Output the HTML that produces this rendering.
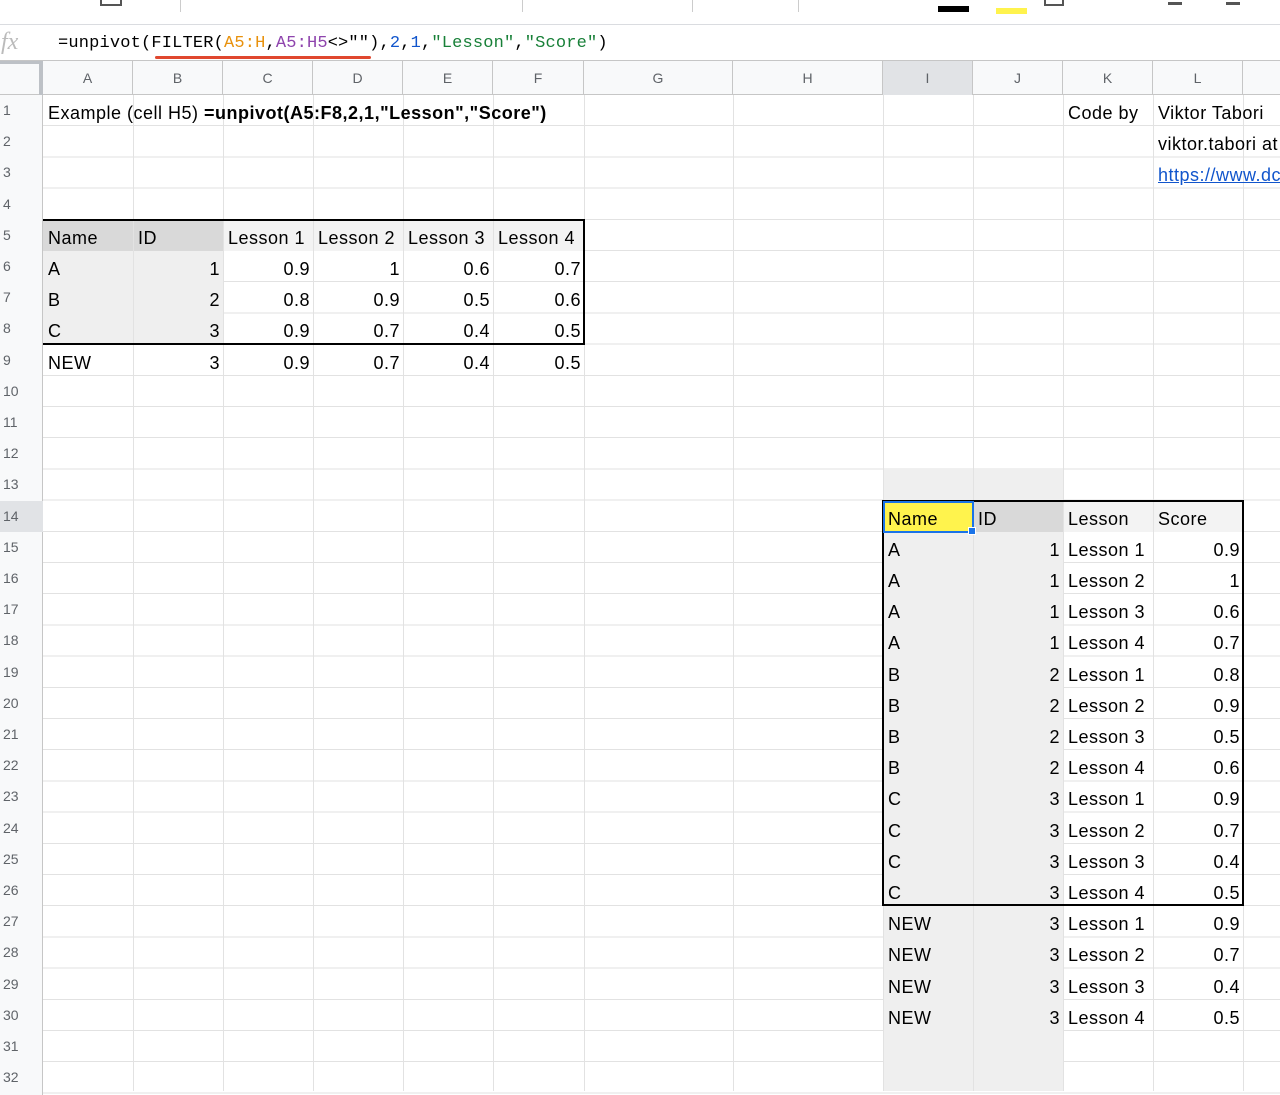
<!DOCTYPE html>
<html><head><meta charset="utf-8">
<style>
*{margin:0;padding:0;box-sizing:border-box}
body{width:1280px;height:1091px;overflow:hidden;background:#fff;position:relative;font-family:"Liberation Sans",Arial,sans-serif;color:#000}
.abs{position:absolute}
#grid{position:absolute;left:0;top:95px;width:1280px;height:1000px;
background-image:repeating-linear-gradient(to bottom,transparent 0,transparent 30.2px,#e2e2e2 30.2px,#e2e2e2 31.2px)}
.v{position:absolute;top:61px;width:1px;height:1030px;background:#e2e2e2}
.c{position:absolute;height:31.2px;line-height:31.2px;font-size:18px;letter-spacing:0.5px;padding:3px 4px 0 5px;white-space:nowrap;overflow:hidden}
.n{text-align:right;padding-right:3px}
.rh{position:absolute;left:0;width:40px;height:31.2px;line-height:31.2px;font-size:14px;color:#5f6368;padding-left:3px}
.ch{position:absolute;top:61px;height:34px;line-height:34px;text-align:center;font-size:14px;color:#5f6368;border-right:1px solid #c6c6c6}
.A{left:43px;width:90px}.B{left:133px;width:90px}.C{left:223px;width:90px}.D{left:313px;width:90px}.E{left:403px;width:90px}.F{left:493px;width:91px}
.I{left:883px;width:90px}.J{left:973px;width:90px}.K{left:1063px;width:90px}.L{left:1153px;width:127px}
.r1{top:95px}.r2{top:126.2px}.r3{top:157.4px}.r4{top:188.6px}.r5{top:219.8px}.r6{top:251px}.r7{top:282.2px}.r8{top:313.4px}.r9{top:344.6px}.r10{top:375.8px}.r11{top:407px}.r12{top:438.2px}.r13{top:469.4px}.r14{top:500.6px}.r15{top:531.8px}.r16{top:563px}.r17{top:594.2px}.r18{top:625.4px}.r19{top:656.6px}.r20{top:687.8px}.r21{top:719px}.r22{top:750.2px}.r23{top:781.4px}.r24{top:812.6px}.r25{top:843.8px}.r26{top:875px}.r27{top:906.2px}.r28{top:937.4px}.r29{top:968.6px}.r30{top:999.8px}.r31{top:1031px}.r32{top:1062.2px}
.mono{font-family:"Liberation Mono","DejaVu Sans Mono",monospace}
</style></head><body>
<div class="abs" style="left:0;top:0;width:1280px;height:25px;background:#fff;border-bottom:1px solid #dadce0"></div>
<div class="abs" style="left:100px;top:0;width:22px;height:6px;border:2px solid #555;border-top:none"></div>
<div class="abs" style="left:180px;top:0;width:1px;height:12px;background:#ccc"></div>
<div class="abs" style="left:522px;top:0;width:1px;height:12px;background:#ccc"></div>
<div class="abs" style="left:692px;top:0;width:1px;height:12px;background:#ccc"></div>
<div class="abs" style="left:798px;top:0;width:1px;height:12px;background:#ccc"></div>
<div class="abs" style="left:938px;top:6px;width:31px;height:6px;background:#000"></div>
<div class="abs" style="left:996px;top:8px;width:31px;height:6px;background:#fff34d"></div>
<div class="abs" style="left:1044px;top:0;width:20px;height:6px;border:2px solid #555;border-top:none"></div>
<div class="abs" style="left:1168px;top:2px;width:14px;height:3px;background:#555"></div>
<div class="abs" style="left:1226px;top:2px;width:14px;height:3px;background:#555"></div>
<div class="abs" style="left:0;top:26px;width:1280px;height:35px;background:#fff;border-bottom:1px solid #c6c6c6"></div>
<div class="abs" style="left:1px;top:27px;font:italic 24px 'Liberation Serif',serif;color:#bbb;line-height:30px">fx</div>
<div class="abs mono" style="left:58px;top:33px;font-size:17px;letter-spacing:0.17px;line-height:22px;white-space:pre">=unpivot(FILTER(<span style="color:#e8910c">A5:H</span>,<span style="color:#8e44ad">A5:H5</span>&lt;&gt;""),<span style="color:#1155cc">2</span>,<span style="color:#1155cc">1</span>,<span style="color:#188038">"Lesson"</span>,<span style="color:#188038">"Score"</span>)</div>
<div class="abs" style="left:155px;top:56px;width:216px;height:3px;background:#e0472f;border-radius:2px"></div>
<div id="grid"></div>
<div class="abs" style="left:43px;top:220px;width:180px;height:31px;background:#d9d9d9"></div>
<div class="abs" style="left:223px;top:220px;width:361px;height:31px;background:#f3f3f3"></div>
<div class="abs" style="left:43px;top:251px;width:180px;height:93px;background:#efefef"></div>
<div class="abs" style="left:883px;top:469.4px;width:180px;height:622px;background:#efefef"></div>
<div class="abs" style="left:973px;top:500.6px;width:90px;height:31px;background:#d9d9d9"></div>
<div class="abs" style="left:1063px;top:500.6px;width:180px;height:31px;background:#f3f3f3"></div>
<div class="abs" style="left:883px;top:500.6px;width:90px;height:31px;background:#fff34d"></div>
<div class="v" style="left:133px"></div><div class="v" style="left:223px"></div><div class="v" style="left:313px"></div><div class="v" style="left:403px"></div><div class="v" style="left:493px"></div><div class="v" style="left:584px"></div><div class="v" style="left:733px"></div><div class="v" style="left:883px"></div><div class="v" style="left:973px"></div><div class="v" style="left:1063px"></div><div class="v" style="left:1153px"></div><div class="v" style="left:1243px"></div>
<div class="abs" style="left:43px;top:219px;width:542px;height:126px;border:2px solid #000;border-left:none"></div>
<div class="abs" style="left:882px;top:500px;width:362px;height:406px;border:2px solid #000"></div>
<div class="abs" style="left:883px;top:500.6px;width:91px;height:32px;border:2px solid #1a73e8"></div>
<div class="abs" style="left:968px;top:527px;width:8px;height:8px;background:#1a73e8;border:1px solid #fff"></div>
<div class="abs" style="left:0;top:61px;width:1280px;height:34px;background:#f8f9fa;border-bottom:1px solid #c6c6c6"></div>
<div class="abs" style="left:39px;top:61px;width:4px;height:34px;background:#bdc1c6"></div>
<div class="abs" style="left:0;top:61px;width:43px;height:3px;background:#bdc1c6"></div>
<div class="ch A">A</div><div class="ch B">B</div><div class="ch C">C</div><div class="ch D">D</div><div class="ch E">E</div><div class="ch F">F</div>
<div class="ch" style="left:584px;width:149px">G</div><div class="ch" style="left:733px;width:150px">H</div>
<div class="ch I" style="background:#e1e3e6">I</div><div class="ch J">J</div><div class="ch K">K</div><div class="ch L" style="width:90px">L</div>
<div class="abs" style="left:0;top:95px;width:43px;height:1000px;background:#f8f9fa;border-right:1px solid #c6c6c6"></div>
<div class="abs" style="left:0;top:500.6px;width:43px;height:31px;background:#e1e3e6"></div>
<div class="rh r1">1</div><div class="rh r2">2</div><div class="rh r3">3</div><div class="rh r4">4</div><div class="rh r5">5</div><div class="rh r6">6</div><div class="rh r7">7</div><div class="rh r8">8</div><div class="rh r9">9</div><div class="rh r10">10</div><div class="rh r11">11</div><div class="rh r12">12</div><div class="rh r13">13</div><div class="rh r14">14</div><div class="rh r15">15</div><div class="rh r16">16</div><div class="rh r17">17</div><div class="rh r18">18</div><div class="rh r19">19</div><div class="rh r20">20</div><div class="rh r21">21</div><div class="rh r22">22</div><div class="rh r23">23</div><div class="rh r24">24</div><div class="rh r25">25</div><div class="rh r26">26</div><div class="rh r27">27</div><div class="rh r28">28</div><div class="rh r29">29</div><div class="rh r30">30</div><div class="rh r31">31</div><div class="rh r32">32</div>
<div class="c r1" style="left:43px;width:600px">Example (cell H5) <b>=unpivot(A5:F8,2,1,"Lesson","Score")</b></div>
<div class="c r1 K">Code by</div><div class="c r1 L">Viktor Tabori</div>
<div class="c r2 L">viktor.tabori at</div>
<div class="c r3 L" style="color:#1155cc;text-decoration:underline">https://www.dc</div>
<div class="c r5 A">Name</div><div class="c r5 B">ID</div><div class="c r5 C">Lesson 1</div><div class="c r5 D">Lesson 2</div><div class="c r5 E">Lesson 3</div><div class="c r5 F">Lesson 4</div>
<div class="c r6 A">A</div><div class="c n r6 B">1</div><div class="c n r6 C">0.9</div><div class="c n r6 D">1</div><div class="c n r6 E">0.6</div><div class="c n r6 F">0.7</div>
<div class="c r7 A">B</div><div class="c n r7 B">2</div><div class="c n r7 C">0.8</div><div class="c n r7 D">0.9</div><div class="c n r7 E">0.5</div><div class="c n r7 F">0.6</div>
<div class="c r8 A">C</div><div class="c n r8 B">3</div><div class="c n r8 C">0.9</div><div class="c n r8 D">0.7</div><div class="c n r8 E">0.4</div><div class="c n r8 F">0.5</div>
<div class="c r9 A">NEW</div><div class="c n r9 B">3</div><div class="c n r9 C">0.9</div><div class="c n r9 D">0.7</div><div class="c n r9 E">0.4</div><div class="c n r9 F">0.5</div>
<div class="c r14 I">Name</div><div class="c r14 J">ID</div><div class="c r14 K">Lesson</div><div class="c r14 L" style="width:90px">Score</div>
<div class="c r15 I">A</div><div class="c n r15 J">1</div><div class="c r15 K">Lesson 1</div><div class="c n r15 L" style="width:90px">0.9</div>
<div class="c r16 I">A</div><div class="c n r16 J">1</div><div class="c r16 K">Lesson 2</div><div class="c n r16 L" style="width:90px">1</div>
<div class="c r17 I">A</div><div class="c n r17 J">1</div><div class="c r17 K">Lesson 3</div><div class="c n r17 L" style="width:90px">0.6</div>
<div class="c r18 I">A</div><div class="c n r18 J">1</div><div class="c r18 K">Lesson 4</div><div class="c n r18 L" style="width:90px">0.7</div>
<div class="c r19 I">B</div><div class="c n r19 J">2</div><div class="c r19 K">Lesson 1</div><div class="c n r19 L" style="width:90px">0.8</div>
<div class="c r20 I">B</div><div class="c n r20 J">2</div><div class="c r20 K">Lesson 2</div><div class="c n r20 L" style="width:90px">0.9</div>
<div class="c r21 I">B</div><div class="c n r21 J">2</div><div class="c r21 K">Lesson 3</div><div class="c n r21 L" style="width:90px">0.5</div>
<div class="c r22 I">B</div><div class="c n r22 J">2</div><div class="c r22 K">Lesson 4</div><div class="c n r22 L" style="width:90px">0.6</div>
<div class="c r23 I">C</div><div class="c n r23 J">3</div><div class="c r23 K">Lesson 1</div><div class="c n r23 L" style="width:90px">0.9</div>
<div class="c r24 I">C</div><div class="c n r24 J">3</div><div class="c r24 K">Lesson 2</div><div class="c n r24 L" style="width:90px">0.7</div>
<div class="c r25 I">C</div><div class="c n r25 J">3</div><div class="c r25 K">Lesson 3</div><div class="c n r25 L" style="width:90px">0.4</div>
<div class="c r26 I">C</div><div class="c n r26 J">3</div><div class="c r26 K">Lesson 4</div><div class="c n r26 L" style="width:90px">0.5</div>
<div class="c r27 I">NEW</div><div class="c n r27 J">3</div><div class="c r27 K">Lesson 1</div><div class="c n r27 L" style="width:90px">0.9</div>
<div class="c r28 I">NEW</div><div class="c n r28 J">3</div><div class="c r28 K">Lesson 2</div><div class="c n r28 L" style="width:90px">0.7</div>
<div class="c r29 I">NEW</div><div class="c n r29 J">3</div><div class="c r29 K">Lesson 3</div><div class="c n r29 L" style="width:90px">0.4</div>
<div class="c r30 I">NEW</div><div class="c n r30 J">3</div><div class="c r30 K">Lesson 4</div><div class="c n r30 L" style="width:90px">0.5</div>
</body></html>
